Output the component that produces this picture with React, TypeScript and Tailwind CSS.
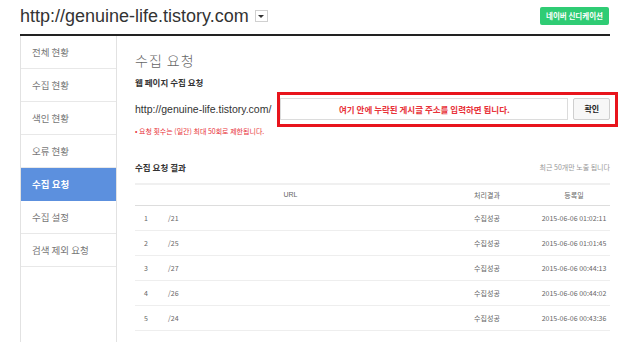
const KR = "font-['Noto_Sans_CJK_KR','Noto_Sans',sans-serif]";

const MENU = ['전체 현황', '수집 현황', '색인 현황', '오류 현황', '수집 요청', '수집 설정', '검색 제외 요청'];

const ROWS = [
  { n: 1, path: '/21', date: '2015-06-06 01:02:11' },
  { n: 2, path: '/25', date: '2015-06-06 01:01:45' },
  { n: 3, path: '/27', date: '2015-06-06 00:44:13' },
  { n: 4, path: '/26', date: '2015-06-06 00:44:02' },
  { n: 5, path: '/24', date: '2015-06-06 00:43:36' },
];

function Sidebar() {
  return (
    <aside className="w-[97px] shrink-0 border-x border-[#e2e2e2]">
      {MENU.map((m) => {
        const active = m === '수집 요청';
        return (
          <div
            key={m}
            className={
              active
                ? `flex h-[33px] items-center bg-[#5c90de] px-[11px] text-[9.5px] font-bold text-white ${KR}`
                : `flex h-[33px] items-center border-b border-[#e8e8e8] px-[11px] text-[9.5px] text-[#777] ${KR}`
            }
          >
            {m}
          </div>
        );
      })}
    </aside>
  );
}

function RequestForm() {
  return (
    <>
      <h1 className={`mt-[14px] text-[14px] leading-[20px] font-light tracking-[1px] text-[#666] ${KR}`}>수집 요청</h1>
      <h2 className={`mt-[6px] text-[8.5px] leading-[12px] font-bold text-[#333] ${KR}`}>웹 페이지 수집 요청</h2>
      <div className="mt-[4px] flex items-center whitespace-nowrap">
        <span className="shrink-0 font-['Liberation_Sans',sans-serif] text-[10.5px] text-[#333]">
          http://genuine-life.tistory.com/
        </span>
        <div className="ml-[6px] flex shrink-0 gap-[5px] border-[3px] border-[#e8141c] pt-[3px] pr-[5px] pb-[4px]">
          <div
            className={`flex h-[22px] w-[288px] items-center justify-center border border-[#dcdcdc] bg-white text-[8.5px] font-bold text-[#e8333a] ${KR}`}
          >
            여기 안에 누락된 게시글 주소를 입력하면 됩니다.
          </div>
          <button
            type="button"
            className={`h-[22px] w-[37px] rounded-[2px] border border-[#cfcfcf] bg-[#f7f7f7] text-[8px] font-bold text-[#222] ${KR}`}
          >
            확인
          </button>
        </div>
      </div>
      <p className={`text-[7px] leading-[8px] text-[#e8333a] ${KR}`}>• 요청 횟수는 (일간) 최대 50회로 제한됩니다.</p>
    </>
  );
}

function ResultTable() {
  return (
    <>
      <div className="mt-[27px] flex items-center justify-between leading-[10px]">
        <span className={`text-[8.5px] font-bold text-[#333] ${KR}`}>수집 요청 결과</span>
        <span className={`text-[7px] text-[#999] ${KR}`}>최근 50개만 노출 됩니다</span>
      </div>
      <div className={`mt-[11px] border-t-2 border-[#f0f0f0] text-[7px] ${KR}`}>
        <div className="grid h-[21px] grid-cols-[25px_1fr_102px_72px] items-center border-b border-[#dddddd] text-[#666]">
          <span className="col-span-2 pl-[10px] text-center font-['Liberation_Sans',sans-serif]">URL</span>
          <span className="text-center">처리결과</span>
          <span className="text-center">등록일</span>
        </div>
        {ROWS.map((r) => (
          <div
            key={r.n}
            className="grid h-[25px] grid-cols-[25px_1fr_102px_72px] items-center border-b border-[#eeeeee] text-[#666]"
          >
            <span className="pl-[9px]">{r.n}</span>
            <span className="pl-[8px]">{r.path}</span>
            <span className="text-center">수집성공</span>
            <span className="text-center">{r.date}</span>
          </div>
        ))}
      </div>
    </>
  );
}

export default function App() {
  return (
    <div className="flex h-[342px] w-[630px] flex-col overflow-hidden bg-white">
      <header className="mx-[20px] flex h-[36px] shrink-0 items-center justify-between border-b-2 border-[#222] pb-[2px]">
        <div className="flex items-center">
          <span className="font-['Liberation_Sans',sans-serif] text-[18px] leading-[22px] text-[#333]">
            http://genuine-life.tistory.com
          </span>
          <span className="ml-[6px] flex h-[12px] w-[13px] items-center justify-center border border-[#d0d0d0] bg-white">
            <span className="h-0 w-0 border-x-[3px] border-t-[3px] border-x-transparent border-t-[#333]" />
          </span>
        </div>
        <button
          type="button"
          className={`mr-[1px] h-[18px] w-[69px] rounded-[2px] bg-[#2fcc74] text-[7.5px] font-bold text-white ${KR}`}
        >
          네이버 신디케이션
        </button>
      </header>
      <div className="mx-[20px] flex flex-1">
        <Sidebar />
        <main className="min-w-0 flex-1 pl-[18px]">
          <RequestForm />
          <ResultTable />
        </main>
      </div>
    </div>
  );
}
